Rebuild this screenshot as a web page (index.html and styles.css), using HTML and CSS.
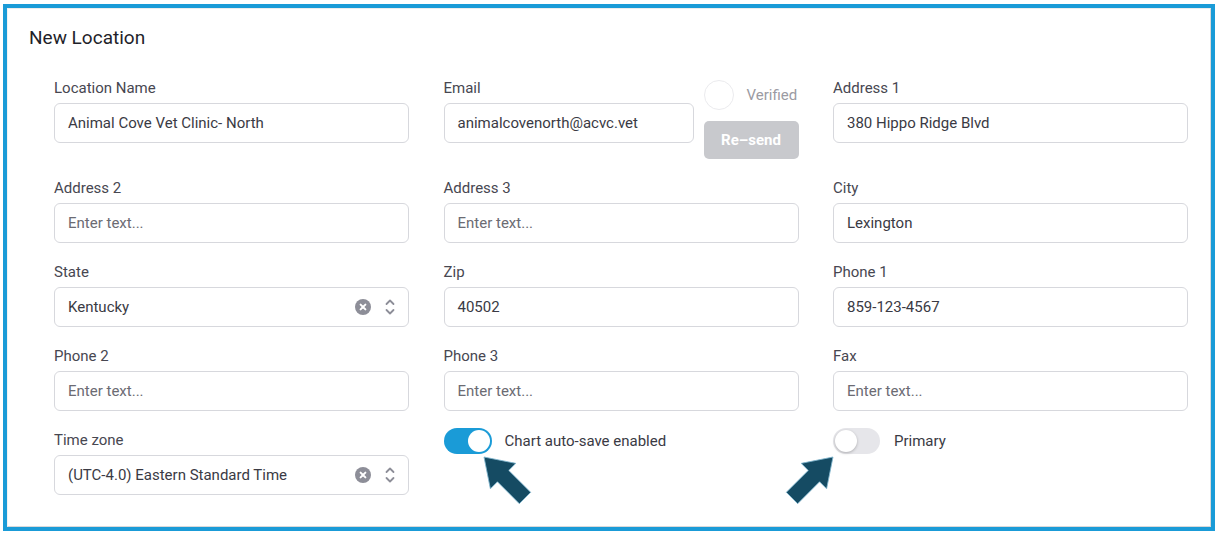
FILE: index.html
```html
<!DOCTYPE html>
<html>
<head>
<meta charset="utf-8">
<link rel="stylesheet" href="styles.css">
</head>
<body>
<div class="frame">
  <div class="card">
    <h1 class="title">New Location</h1>
    <div class="form">
      <div class="field">
        <label class="lbl">Location Name</label>
        <div class="input">Animal Cove Vet Clinic- North</div>
      </div>
      <div class="field email-field">
        <div class="email-main">
          <label class="lbl">Email</label>
          <div class="input">animalcovenorth@acvc.vet</div>
        </div>
        <div class="verify">
          <div class="verify-row"><span class="circle"></span><span class="verified">Verified</span></div>
          <button class="resend">Re–send</button>
        </div>
      </div>
      <div class="field">
        <label class="lbl">Address 1</label>
        <div class="input">380 Hippo Ridge Blvd</div>
      </div>

      <div class="field">
        <label class="lbl">Address 2</label>
        <div class="input ph">Enter text...</div>
      </div>
      <div class="field">
        <label class="lbl">Address 3</label>
        <div class="input ph">Enter text...</div>
      </div>
      <div class="field">
        <label class="lbl">City</label>
        <div class="input">Lexington</div>
      </div>

      <div class="field">
        <label class="lbl">State</label>
        <div class="input select">
          <span class="sel-text">Kentucky</span>
          <span class="clear"><svg width="16" height="16" viewBox="0 0 16 16"><circle cx="8" cy="8" r="8" fill="#8d8e98"/><path d="M5.6 5.6 L10.4 10.4 M10.4 5.6 L5.6 10.4" stroke="#fff" stroke-width="2" stroke-linecap="round"/></svg></span>
          <span class="chev"><svg width="10" height="18" viewBox="0 0 10 18"><path d="M1.5 6 L5 2.5 L8.5 6 M1.5 12 L5 15.5 L8.5 12" fill="none" stroke="#8d8e98" stroke-width="1.8" stroke-linecap="round" stroke-linejoin="round"/></svg></span>
        </div>
      </div>
      <div class="field">
        <label class="lbl">Zip</label>
        <div class="input">40502</div>
      </div>
      <div class="field">
        <label class="lbl">Phone 1</label>
        <div class="input">859-123-4567</div>
      </div>

      <div class="field">
        <label class="lbl">Phone 2</label>
        <div class="input ph">Enter text...</div>
      </div>
      <div class="field">
        <label class="lbl">Phone 3</label>
        <div class="input ph">Enter text...</div>
      </div>
      <div class="field">
        <label class="lbl">Fax</label>
        <div class="input ph">Enter text...</div>
      </div>

      <div class="field">
        <label class="lbl">Time zone</label>
        <div class="input select">
          <span class="sel-text">(UTC-4.0) Eastern Standard Time</span>
          <span class="clear"><svg width="16" height="16" viewBox="0 0 16 16"><circle cx="8" cy="8" r="8" fill="#8d8e98"/><path d="M5.6 5.6 L10.4 10.4 M10.4 5.6 L5.6 10.4" stroke="#fff" stroke-width="2" stroke-linecap="round"/></svg></span>
          <span class="chev"><svg width="10" height="18" viewBox="0 0 10 18"><path d="M1.5 6 L5 2.5 L8.5 6 M1.5 12 L5 15.5 L8.5 12" fill="none" stroke="#8d8e98" stroke-width="1.8" stroke-linecap="round" stroke-linejoin="round"/></svg></span>
        </div>
      </div>
      <div class="field toggle-field">
        <span class="toggle on"><span class="knob"></span></span>
        <span class="toggle-label">Chart auto-save enabled</span>
      </div>
      <div class="field toggle-field">
        <span class="toggle off"><span class="knob"></span></span>
        <span class="toggle-label">Primary</span>
      </div>
    </div>
  </div>
  <svg class="arrow" width="1212" height="527" viewBox="0 0 1212 527">
    <polygon transform="translate(481,453) rotate(-45)" points="0,0 -18,27 -8,27 -8,58 8,58 8,27 18,27" fill="#154b63" stroke="#7fb6cf" stroke-width="0.8"/>
    <polygon transform="translate(830,453) rotate(45)" points="0,0 -18,27 -8,27 -8,58 8,58 8,27 18,27" fill="#154b63" stroke="#7fb6cf" stroke-width="0.8"/>
  </svg>
</div>
</body>
</html>
```

FILE: styles.css
```css
* { box-sizing: border-box; }
html, body { margin: 0; padding: 0; background: #fff; }
body { font-family: Roboto, "Liberation Sans", Arial, sans-serif; }

.frame {
  position: relative;
  margin: 4px 5px 0 3px;
  width: 1212px;
  height: 527px;
  border: 4px solid #1a9bd7;
}

.card {
  height: 100%;
  border: 1px solid #d9d9d9;
  border-top-color: #ececec;
  border-left-color: #f2f2f2;
  padding: 17px 0 0 21px;
}

.title {
  margin: 0;
  font-size: 19px;
  line-height: 24px;
  font-weight: 400;
  color: #1f1f2a;
}

.form {
  margin: 28px 0 0 25px;
  display: grid;
  grid-template-columns: 355px 355px 355px;
  column-gap: 34.5px;
  row-gap: 19px;
  align-items: start;
}

.field { display: flex; flex-direction: column; }

.lbl {
  font-size: 15px;
  line-height: 20px;
  color: #474751;
  margin-bottom: 5px;
}

.input {
  height: 40px;
  border: 1px solid #d7d8dd;
  border-radius: 6px;
  padding: 0 13px;
  display: flex;
  align-items: center;
  font-size: 15px;
  color: #3a3a44;
  background: #fff;
}
.input.ph { color: #6b6b73; }

.select .sel-text { flex: 1; }
.select .clear { display: flex; margin-right: 14px; }
.select .chev { display: flex; margin-right: 0; }

.email-field { flex-direction: row; gap: 9px; }
.email-main { width: 250px; display: flex; flex-direction: column; }
.verify { width: 95px; display: flex; flex-direction: column; padding-top: 2px; margin-left: 1px; }
.verify-row { display: flex; align-items: center; height: 30px; }
.circle {
  width: 30px; height: 30px; border-radius: 50%;
  border: 1px solid #ebebee; background: #fff;
}
.verified { margin-left: 13px; font-size: 15px; color: #9b9ba3; }
.resend {
  margin-top: 11px;
  height: 38px;
  border: none;
  border-radius: 5px;
  background: #c8c9cd;
  color: #fff;
  font-family: Roboto, "Liberation Sans", Arial, sans-serif;
  font-weight: 700;
  font-size: 15px;
  padding: 0;
}

.toggle-field { flex-direction: row; align-items: center; margin-top: -2px; }
.toggle {
  position: relative;
  width: 48px; height: 26px; border-radius: 13px;
  display: inline-block;
}
.toggle.on { background: #1a9bd7; }
.toggle.off { background: #e6e6ea; width: 47px; }
.knob {
  position: absolute; top: 2px;
  width: 22px; height: 22px; border-radius: 50%; background: #fff;
}
.toggle.on .knob { right: 2px; }
.toggle.off .knob { left: 2px; box-shadow: 0 1px 3px rgba(0,0,0,0.25); }
.toggle-label { margin-left: 13px; font-size: 15px; color: #3a3a44; }
.toggle.off + .toggle-label { margin-left: 14px; }

.arrow { position: absolute; left: -4px; top: -4px; pointer-events: none; }
```
